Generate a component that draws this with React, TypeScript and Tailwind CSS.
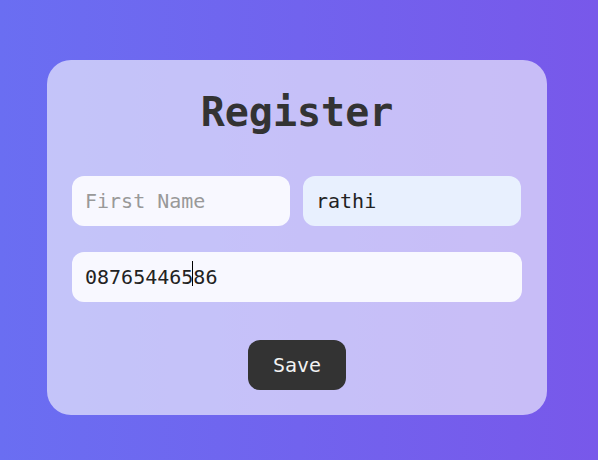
import React from "react";

export default function App() {
  const mono = { fontFamily: '"DejaVu Sans Mono", "Liberation Mono", monospace' };
  return (
    <div
      className="w-[598px] h-[460px] pl-[47px] pt-[60px] bg-[linear-gradient(to_right,#6a6ef2,#7858ea)]"
      style={mono}
    >
      <div className="w-[500px] h-[355px] rounded-[24px] bg-white/60 px-[25px] pt-[28px] flex flex-col">
        <h1 className="text-[40px] leading-[48px] font-bold text-[#333] text-center">Register</h1>
        <div className="mt-[40px] flex gap-[13px]">
          <input
            className="w-[218px] h-[50px] rounded-[12px] bg-[#f8f8ff] px-[13px] text-[20px] text-[#222] placeholder:text-[#999] outline-none"
            placeholder="First Name"
            style={mono}
          />
          <input
            className="w-[218px] h-[50px] rounded-[12px] bg-[#e8f0fe] px-[13px] text-[20px] text-[#222] outline-none"
            defaultValue="rathi"
            style={mono}
          />
        </div>
        <div className="relative mt-[26px]">
          <input
            className="w-[450px] h-[50px] rounded-[12px] bg-[#f8f8ff] px-[13px] text-[20px] text-[#222] outline-none"
            defaultValue="08765446586"
            style={mono}
          />
          <span className="absolute left-[120px] top-[9px] w-[1px] h-[25px] bg-black" />
        </div>
        <div className="mt-[38px] flex justify-center">
          <button
            className="w-[98px] h-[50px] rounded-[12px] bg-[#333] text-[#f2f2f2] text-[20px]"
            style={mono}
          >
            Save
          </button>
        </div>
      </div>
    </div>
  );
}
